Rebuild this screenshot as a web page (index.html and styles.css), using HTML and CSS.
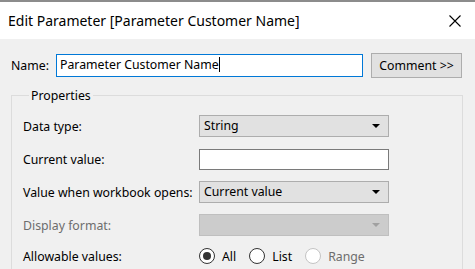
FILE: index.html
```html
<!DOCTYPE html>
<html lang="en">
<head>
  <meta charset="UTF-8" />
  <title>Edit Parameter</title>
  <link rel="stylesheet" href="styles.css">
</head>
<body>
  <div class="titlebar">
    <span class="title">Edit Parameter [Parameter Customer Name]</span>
    <svg class="close" width="12" height="12" viewBox="0 0 12 12">
      <path d="M0.5 0.5 L11.5 11.5 M11.5 0.5 L0.5 11.5" stroke="#000" stroke-width="1.1" fill="none"/>
    </svg>
  </div>

  <div class="content">
    <div class="name-row">
      <span class="name-label">Name:</span>
      <div class="textbox focused">Parameter Customer Name<span class="caret"></span></div>
      <div class="button">Comment &gt;&gt;</div>
    </div>

    <fieldset class="group">
      <legend>Properties</legend>

      <div class="row">
        <span class="label">Data type:</span>
        <div class="combo">String<span class="arrow"></span></div>
      </div>

      <div class="row">
        <span class="label">Current value:</span>
        <div class="textbox plain"></div>
      </div>

      <div class="row">
        <span class="label">Value when workbook opens:</span>
        <div class="combo">Current value<span class="arrow"></span></div>
      </div>

      <div class="row tight">
        <span class="label disabled">Display format:</span>
        <div class="combo off"><span class="arrow"></span></div>
      </div>

      <div class="row tight">
        <span class="label">Allowable values:</span>
        <div class="radios">
          <span class="radio checked"></span><span class="radio-text">All</span>
          <span class="radio"></span><span class="radio-text">List</span>
          <span class="radio off"></span><span class="radio-text disabled">Range</span>
        </div>
      </div>
    </fieldset>
  </div>
</body>
</html>
```

FILE: styles.css
```css
html, body {
  height: 269px;
  overflow: hidden;
}
body {
  margin: 0;
  background-color: #f0f0f0;
  font-family: "Noto Sans", sans-serif;
  font-size: 12.3px;
  color: #000;
}
.titlebar {
  height: 37px;
  border-top: 2px solid #8c8c8c;
  background-color: #fff;
  display: flex;
  align-items: center;
  justify-content: space-between;
  padding: 0 14px 0 8px;
}
.title {
  font-size: 14px;
}
.content {
  padding: 14px 12px 0 11px;
}
.name-row {
  display: flex;
  align-items: center;
  height: 25px;
}
.name-label {
  width: 45px;
}
.textbox {
  box-sizing: border-box;
  background-color: #fff;
  border: 1px solid #7a7a7a;
  height: 22px;
  line-height: 20px;
  padding-left: 3px;
  white-space: nowrap;
}
.textbox.focused {
  width: 307px;
  height: 23px;
  border-color: #0078d7;
}
.textbox.plain {
  width: 190px;
  height: 21px;
}
.caret {
  display: inline-block;
  width: 1px;
  height: 15px;
  background-color: #000;
  vertical-align: -3px;
}
.button {
  box-sizing: border-box;
  margin-left: 8px;
  width: 91px;
  height: 25px;
  line-height: 23px;
  text-align: center;
  background-color: #e1e1e1;
  border: 1px solid #adadad;
}
.group {
  margin: 9px 0 0 0;
  padding: 11px 0 20px 11px;
  border: 1px solid #dcdcdc;
  min-height: 200px;
}
.group legend {
  padding: 0 2px;
  margin-left: 6px;
}
.row {
  display: flex;
  align-items: center;
  height: 22px;
  margin-bottom: 11px;
}
.row.tight {
  margin-bottom: 9px;
}
.label {
  width: 176px;
}
.disabled {
  color: #6d6d6d;
}
.combo {
  box-sizing: border-box;
  position: relative;
  width: 190px;
  height: 22px;
  line-height: 20px;
  padding-left: 4px;
  background-color: #e1e1e1;
  border: 1px solid #adadad;
}
.combo.off {
  background-color: #cccccc;
  border-color: #bfbfbf;
}
.arrow {
  position: absolute;
  right: 8px;
  top: 8px;
  border-left: 4px solid transparent;
  border-right: 4px solid transparent;
  border-top: 4px solid #000;
}
.combo.off .arrow {
  border-top-color: #a0a0a0;
}
.radios {
  display: flex;
  align-items: center;
}
.radio {
  box-sizing: border-box;
  width: 16px;
  height: 16px;
  border: 1px solid #333;
  border-radius: 50%;
  background-color: #fff;
  position: relative;
}
.radio.checked::after {
  content: "";
  position: absolute;
  left: 3px;
  top: 3px;
  width: 8px;
  height: 8px;
  border-radius: 50%;
  background-color: #333;
}
.radio.off {
  border-color: #c4c4c4;
}
.radio-text {
  margin: 0 13px 0 7px;
}
```
